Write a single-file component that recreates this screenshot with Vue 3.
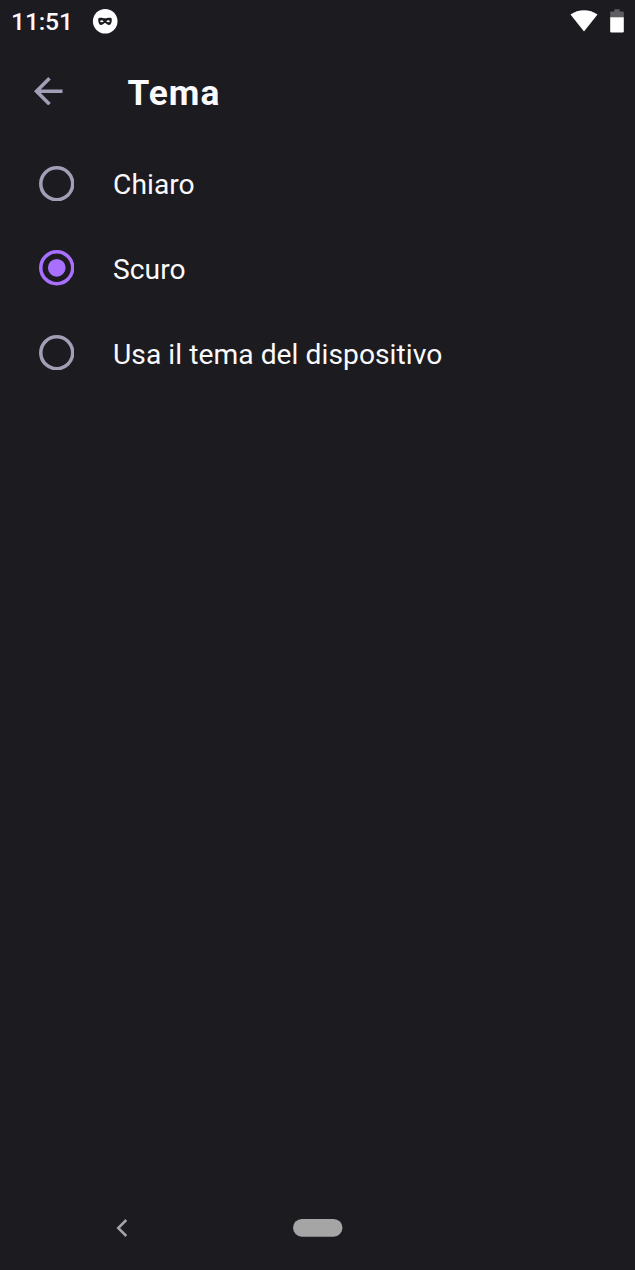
<script setup>
import { ref } from 'vue'

const options = [
  { id: 'light', label: 'Chiaro' },
  { id: 'dark', label: 'Scuro' },
  { id: 'system', label: 'Usa il tema del dispositivo' },
]
const selected = ref('dark')
</script>

<template>
  <div class="screen">
    <header class="status">
      <span class="clock">11:51</span>
      <svg class="mask" viewBox="0 0 26 26">
        <circle cx="13.2" cy="13.2" r="12.3" fill="#fff" />
        <path
          fill="#1c1b20"
          fill-rule="evenodd"
          d="M8.700 9.700c1.700 0 2.700.6 4.300.6s2.600-.6 4.300-.6c1.400 0 2.500.2 2.500 1.800 0 3.500-1 5.500-3 5.500-2.100 0-2.500-1.900-3.800-1.900s-1.700 1.900-3.800 1.900c-2 0-3-2-3-5.500 0-1.600 1.100-1.800 2.500-1.800zM7.900 13.200q1.900 2.100 3.800 0-1.900-2.100-3.800 0zM14.300 13.200q1.900 2.100 3.800 0-1.900-2.100-3.800 0z"
        />
      </svg>
      <svg class="wifi" viewBox="0 0 28 22">
        <path fill="#fff" d="M14 21.500L.5 4.600C4.500 1.600 9 .2 14 .2s9.500 1.400 13.500 4.400z" />
      </svg>
      <svg class="battery" viewBox="0 0 14 24">
        <path fill="#5f5e62" d="M.2 3.600q0-1.100 1.100-1.100h3.100V.2h5.200v2.300h3.100q1.100 0 1.100 1.100v5H.2z" />
        <path fill="#fff" d="M.2 8.300h13.600v14q0 1.200-1.100 1.200H1.300q-1.100 0-1.100-1.200z" />
      </svg>
    </header>

    <div class="toolbar">
      <svg class="back" viewBox="4 4 16 16">
        <path fill="#a29eb5" d="M20 11H7.830l5.590-5.590L12 4l-8 8 8 8 1.410-1.410L7.830 13H20v-2z" />
      </svg>
      <h1 class="title">Tema</h1>
    </div>

    <main class="options" role="radiogroup">
      <div
        v-for="option in options"
        :key="option.id"
        class="option"
        role="radio"
        :aria-checked="selected === option.id"
        @click="selected = option.id"
      >
        <svg class="radio" :class="{ on: selected === option.id }" viewBox="0 0 20 20">
          <circle cx="10" cy="10" r="9" fill="none" stroke="currentColor" stroke-width="2" />
          <circle v-if="selected === option.id" cx="10" cy="10" r="5" fill="currentColor" />
        </svg>
        <span class="label">{{ option.label }}</span>
      </div>
    </main>

    <nav class="navbar">
      <svg class="nav-back" viewBox="0 0 12 18">
        <path d="M10.300 1L2.200 9l8.100 8" fill="none" stroke="#a5a5a5" stroke-width="2.500" />
      </svg>
      <svg class="pill" viewBox="0 0 50 18">
        <rect x="0" y="0" width="49.500" height="17.700" rx="8.850" fill="#a5a5a5" />
      </svg>
    </nav>
  </div>
</template>

<style>
body {
  background: #1c1b20;
}
</style>

<style scoped>
.screen {
  display: flex;
  flex-direction: column;
  width: 635px;
  height: 1270px;
  overflow: hidden;
  background: #1c1b20;
  color: #fafafc;
  font-family: Roboto, sans-serif;
}
.status {
  display: flex;
  align-items: center;
  flex: none;
  height: 42px;
  padding: 0 11px;
  box-sizing: border-box;
}
.clock {
  width: 81px;
  margin-top: 2px;
  font-size: 24.700px;
  font-weight: 500;
  line-height: 30px;
  letter-spacing: -0.150px;
}
.mask {
  width: 26px;
  height: 26px;
}
.wifi {
  width: 28px;
  height: 22px;
  margin-left: auto;
}
.battery {
  width: 14px;
  height: 24px;
  margin-left: 12px;
}
.toolbar {
  display: flex;
  align-items: center;
  flex: none;
  height: 99px;
  padding-left: 34px;
  box-sizing: border-box;
  border-bottom: 1px solid #1a191e;
}
.back {
  width: 28.500px;
  height: 28.500px;
}
.title {
  margin: 4px 0 0 65px;
  font-size: 35.300px;
  font-weight: 700;
  line-height: 42px;
  letter-spacing: 1px;
}
.options {
  flex: 1;
}
.option {
  display: flex;
  align-items: center;
  height: 84.700px;
  padding-left: 38.500px;
}
.radio {
  width: 35.500px;
  height: 35.500px;
  color: #a29eb5;
}
.radio.on {
  color: #a970ff;
}
.label {
  margin: 4px 0 0 39px;
  font-size: 28.200px;
  line-height: 36px;
  letter-spacing: 0.050px;
}
.navbar {
  display: flex;
  align-items: center;
  flex: none;
  height: 84px;
  padding-left: 116px;
}
.nav-back {
  width: 12px;
  height: 18px;
}
.pill {
  width: 50px;
  height: 18px;
  margin-left: 164.500px;
}
</style>
